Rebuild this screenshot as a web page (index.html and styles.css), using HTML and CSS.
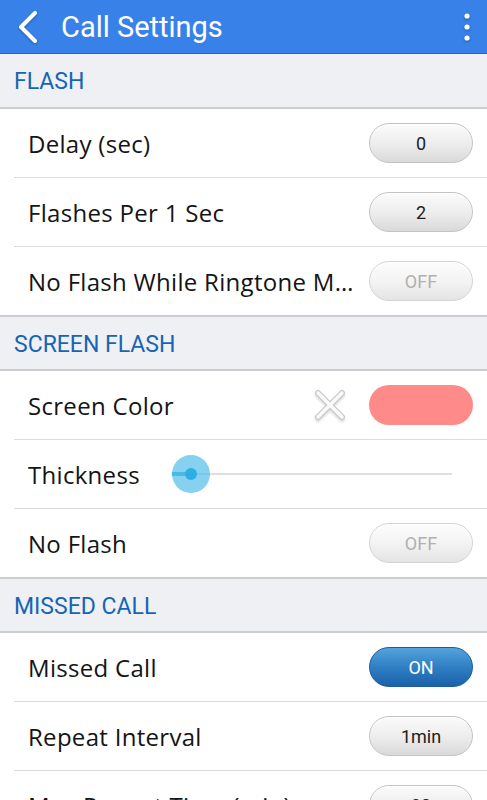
FILE: index.html
```html
<!DOCTYPE html>
<html>
<head>
<meta charset="utf-8">
<link rel="stylesheet" href="styles.css">
</head>
<body>
<header class="appbar">
  <svg class="back" width="24" height="34" viewBox="0 0 24 34"><path d="M19 3 L5 17 L19 31" fill="none" stroke="#fff" stroke-width="4" stroke-linecap="round" stroke-linejoin="round"/></svg>
  <h1 class="title">Call Settings</h1>
  <svg class="more" width="8" height="30" viewBox="0 0 8 30"><circle cx="4" cy="4" r="2.6" fill="#fff"/><circle cx="4" cy="15" r="2.6" fill="#fff"/><circle cx="4" cy="26" r="2.6" fill="#fff"/></svg>
</header>

<div class="section first">FLASH</div>
<div class="row"><span class="label">Delay (sec)</span><span class="pill">0</span></div>
<div class="row"><span class="label">Flashes Per 1 Sec</span><span class="pill">2</span></div>
<div class="row last"><span class="label">No Flash While Ringtone Mute</span><span class="pill off">OFF</span></div>

<div class="section">SCREEN FLASH</div>
<div class="row"><span class="label">Screen Color</span>
  <svg class="clear" width="36" height="36" viewBox="0 0 36 36"><path d="M6 6 L30 30 M30 6 L6 30" stroke="#c9c9c9" stroke-width="6" stroke-linecap="round"/><path d="M6 6 L30 30 M30 6 L6 30" stroke="#fafafa" stroke-width="3.4" stroke-linecap="round"/></svg>
  <span class="pill color"></span></div>
<div class="row"><span class="label">Thickness</span>
  <div class="slider"><div class="fill"></div><div class="thumb"><div class="dot"></div></div></div></div>
<div class="row last"><span class="label">No Flash</span><span class="pill off">OFF</span></div>

<div class="section">MISSED CALL</div>
<div class="row"><span class="label">Missed Call</span><span class="pill on">ON</span></div>
<div class="row"><span class="label">Repeat Interval</span><span class="pill">1min</span></div>
<div class="row"><span class="label">Max Repeat Time (min)</span><span class="pill">30</span></div>
</body>
</html>
```
FILE: styles.css
```css
* { box-sizing: border-box; }
html, body { margin: 0; padding: 0; background: #fff; }
body { font-family: Roboto, "Noto Sans", sans-serif; width: 487px; height: 800px; overflow: hidden; }

.appbar {
  height: 54px;
  background: #3881e9;
  border-bottom: 1px solid #1f66d3;
  display: flex;
  align-items: center;
  padding: 0 18px 0 16px;
}
.back { flex: none; margin-top: 1px; filter: drop-shadow(0 1px 1px rgba(0,0,0,0.3)); }
.title {
  flex: 1;
  margin: 0 0 0 21px;
  font-size: 29px;
  font-weight: 400;
  color: #fff;
}
.more { flex: none; margin-right: -2px; filter: drop-shadow(0 1px 1px rgba(0,0,0,0.3)); }

.section {
  height: 56px;
  background: #eff0f4;
  border-top: 2px solid #cdcdcf;
  border-bottom: 2px solid #cdcdcf;
  display: flex;
  align-items: center;
  padding-left: 14px;
  padding-top: 2px;
  font-size: 23px;
  color: #1565b4;
}
.section.first { border-top: none; height: 55px; }

.row {
  height: 69px;
  margin-left: 14px;
  padding: 0 14px 0 14px;
  border-bottom: 1px solid #dcdcdc;
  display: flex;
  align-items: center;
}
.row.last { border-bottom: none; height: 68px; }

.label {
  flex: 1;
  min-width: 0;
  font-family: "Open Sans", Roboto, sans-serif;
  font-size: 24px;
  letter-spacing: 0.3px;
  color: #141414;
  white-space: nowrap;
  overflow: hidden;
  text-overflow: ellipsis;
  padding-right: 8px;
}

.pill {
  flex: none;
  width: 104px;
  height: 40px;
  border-radius: 20px;
  border: 1px solid #c4c4c4;
  background: linear-gradient(#fbfbfb, #ececec 55%, #d9d9d9);
  box-shadow: inset 0 1px 0 #fff;
  display: flex;
  align-items: center;
  justify-content: center;
  font-size: 18px;
  color: #202020;
}
.pill.off {
  color: #b0b0b0;
  border-color: #d4d4d4;
  background: linear-gradient(#fdfdfd, #f2f2f2 55%, #e4e4e4);
}
.pill.on {
  color: #fff;
  border-color: #1a5c9e;
  background: linear-gradient(#54a3dc, #2f7fc4 50%, #1b61a8);
  box-shadow: none;
}
.pill.color {
  border: none;
  background: #fe8a8a;
  box-shadow: none;
}
.clear { flex: none; margin-right: 21px; filter: drop-shadow(0 2px 1px rgba(0,0,0,0.15)); }

.slider {
  position: relative;
  width: 280px;
  height: 40px;
  margin-right: 21px;
  flex: none;
}
.slider::before {
  content: "";
  position: absolute;
  left: 0; right: 0; top: 19px;
  height: 2px;
  background: #dedede;
}
.fill {
  position: absolute;
  left: 0; top: 18px;
  width: 19px; height: 4px;
  background: #33b1e4;
}
.thumb {
  position: absolute;
  left: 0; top: 1px;
  width: 38px; height: 38px;
  border-radius: 50%;
  background: rgba(83, 190, 234, 0.7);
  display: flex;
  align-items: center;
  justify-content: center;
}
.dot { width: 12px; height: 12px; border-radius: 50%; background: #2eaee2; }
```
